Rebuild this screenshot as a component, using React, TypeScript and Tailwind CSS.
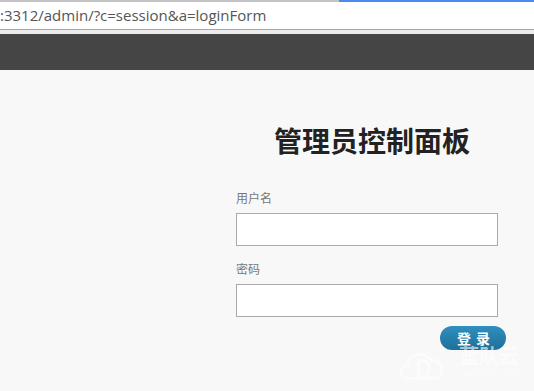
const cjk = '"Noto Sans CJK SC", "Liberation Sans", sans-serif';

function AddressBar() {
  return (
    <div className="h-[34px] bg-white">
      <div className="flex h-[2px]">
        <div className="w-[339px] bg-[#c4c4c4]" />
        <div className="flex-1 bg-[#4a8af4]" />
      </div>
      <div
        className="h-[27px] pt-[3px] text-[15px] leading-[20px] text-[#555]"
        style={{ fontFamily: '"Open Sans", "Liberation Sans", sans-serif' }}
      >
        :3312/admin/?c=session&amp;a=loginForm
      </div>
      <div className="h-px bg-[#a8a8a8]" />
      <div className="h-[4px] bg-[#ececec]" />
    </div>
  );
}

function Field({ label, type }: { label: string; type: string }) {
  return (
    <div className="flex flex-col">
      <label className="text-[12px] leading-[14px] text-[#777]">{label}</label>
      <input
        type={type}
        className="mt-[8px] h-[33px] w-[262px] border border-[#aaa] bg-white outline-none"
      />
    </div>
  );
}

function Watermark() {
  return (
    <div className="pointer-events-none absolute left-[397px] top-[345px] flex items-start gap-[12px] opacity-60">
      <svg width="50" height="38" viewBox="0 0 56 40" fill="none" stroke="#fff" strokeWidth="3">
        <path d="M12 36 C2 36 2 22 12 22 C12 8 32 4 38 16 C50 14 54 28 46 36 Z" />
        <path d="M24 16 V34 M24 16 H30 C38 16 38 34 30 34 H24" />
      </svg>
      <div className="flex flex-col text-white">
        <span className="text-[20px] font-bold leading-[22px]" style={{ fontFamily: cjk }}>蓝队云</span>
        <span className="text-[9px] leading-[12px] tracking-[2px]">landui.com</span>
      </div>
    </div>
  );
}

export default function App() {
  return (
    <div className="relative h-[391px] w-[534px] overflow-hidden bg-[#f8f8f8]" style={{ fontFamily: cjk }}>
      <AddressBar />
      <div className="h-[36px] bg-[#454545]" />
      <div className="ml-[236px] flex w-[262px] flex-col">
        <h1 className="mt-[52px] ml-[10px] text-center text-[28px] font-bold leading-[36px] text-[#222]">
          管理员控制面板
        </h1>
        <div className="mt-[33px] flex flex-col gap-[16px]">
          <Field label="用户名" type="text" />
          <Field label="密码" type="password" />
        </div>
        <div className="mt-[9px] flex justify-end">
          <button className="mr-[-8px] h-[24px] w-[66px] rounded-full bg-gradient-to-b from-[#2f8fbf] to-[#1f6f9a] pl-[2px] text-[14px] font-bold leading-[24px] tracking-[1px] text-white">
            登 录
          </button>
        </div>
      </div>
      <Watermark />
    </div>
  );
}
